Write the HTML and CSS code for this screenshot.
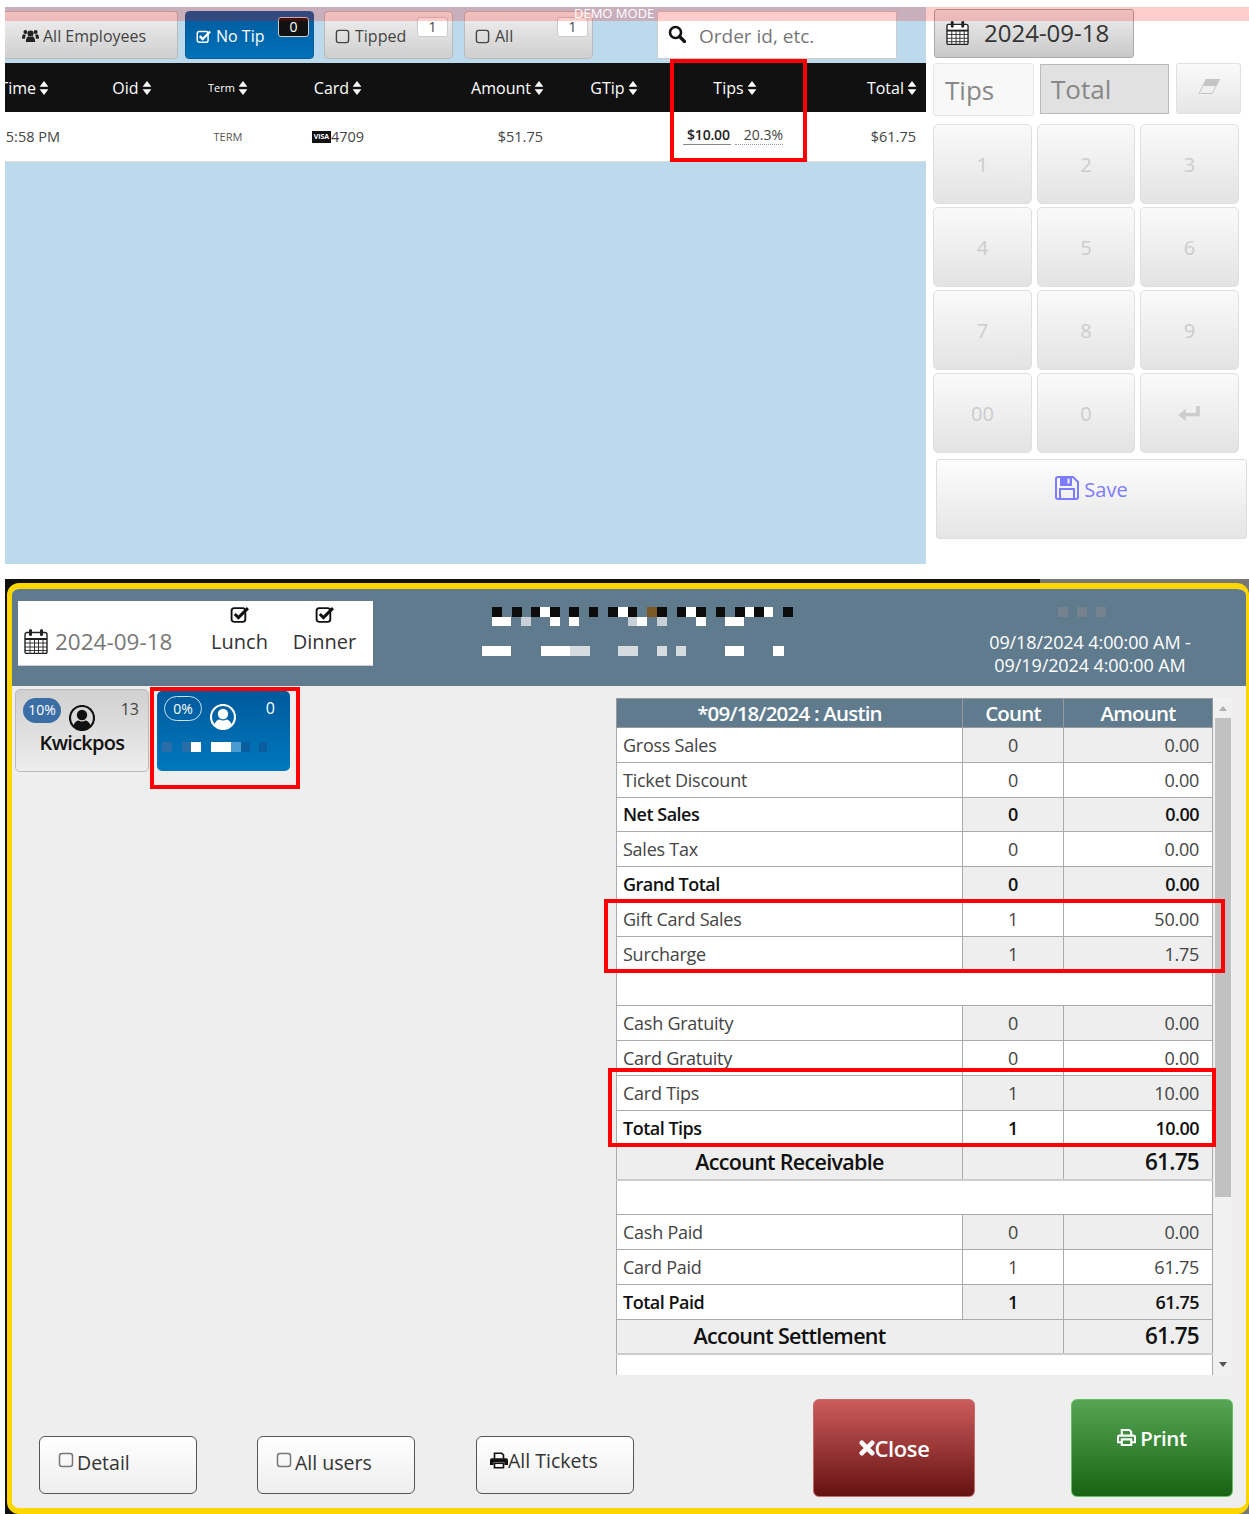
FILE: index.html
```html
<!DOCTYPE html>
<html lang="en">
<head>
    <meta charset="UTF-8">
    <meta name="viewport" content="width=device-width, initial-scale=1.0">
    <title>Tips and Sales Report</title>
    <link rel="stylesheet" href="styles.css">
</head>
<body>

<!-- icon set -->
<svg class="sprite" xmlns="http://www.w3.org/2000/svg">
    <symbol id="i-sort" viewBox="0 0 10 16"><path d="M5 0l5 6.5H0zM5 16L0 9.5h10z"/></symbol>
    <symbol id="i-users" viewBox="0 0 20 16"><circle cx="10" cy="5" r="3.6"/><circle cx="4" cy="3.2" r="2.3"/><circle cx="16" cy="3.2" r="2.3"/><path d="M4.6 15c-.4-4 1.600-6.500 3-6.800 1.200.9 3.600.9 4.800 0 1.400.3 3.400 2.800 3 6.800zM3.700 11.200H.2c-.5-3 .6-5 1.700-5.300.9.6 2 .7 3 .3-.8 1.200-1.300 3-1.200 5zM16.300 11.200h3.500c.5-3-.6-5-1.700-5.300-.9.6-2 .7-3 .3.8 1.200 1.300 3 1.200 5z"/></symbol>
    <symbol id="i-check" viewBox="0 0 18 18"><rect x="1.500" y="3" width="13" height="13" rx="2.500" fill="none" stroke="currentColor" stroke-width="1.800"/><path d="M4.500 8.500l3.500 3.500 9-9" fill="none" stroke="currentColor" stroke-width="2.800"/></symbol>
    <symbol id="i-box" viewBox="0 0 16 16"><rect x="1.500" y="1.500" width="13" height="13" rx="2.500" fill="none" stroke="currentColor" stroke-width="1.500"/></symbol>
    <symbol id="i-search" viewBox="0 0 18 18"><circle cx="7.500" cy="7.500" r="5.500" fill="none" stroke="currentColor" stroke-width="2.600"/><path d="M11.500 11.500l5 5" fill="none" stroke="currentColor" stroke-width="3.200" stroke-linecap="round"/></symbol>
    <symbol id="i-cal" viewBox="0 0 24 25"><path d="M2.500 3.500H21a2 2 0 0 1 2 2V23a1.500 1.500 0 0 1-1.500 1.500h-19A1.500 1.500 0 0 1 1 23V5.500a2 2 0 0 1 1.500-2z" fill="#fff" stroke="currentColor" stroke-width="1.400"/><path d="M1 9h22v2H1z"/><path d="M1 14h22M1 18h22M1 21.500h22M6 10v14M10.500 10v14M14.500 10v14M19 10v14" fill="none" stroke="currentColor" stroke-width=".9"/><rect x="5" y="0" width="3" height="7" rx="1.500"/><rect x="16" y="0" width="3" height="7" rx="1.500"/></symbol>
    <symbol id="i-eraser" viewBox="0 0 22 15"><path d="M8 .5h13.500L14 14.500H1z" fill="none" stroke="currentColor" stroke-width="1"/><path d="M8 .5h13.500L18 7H5z"/></symbol>
    <symbol id="i-enter" viewBox="0 0 24 16"><path d="M23 0v11H8v5L0 9.500 8 3v4.500h11V0z"/></symbol>
    <symbol id="i-save" viewBox="0 0 24 24"><path d="M1 3a2 2 0 0 1 2-2h15l5 5v15a2 2 0 0 1-2 2H3a2 2 0 0 1-2-2z" fill="none" stroke="currentColor" stroke-width="2"/><path d="M6 1h10v8H6zM5 23V13h14v10" fill="none" stroke="currentColor" stroke-width="2"/><path d="M6 1h10v8H6z"/><path d="M12.500 2.500h2v5h-2z" fill="#f4f4f4"/></symbol>
    <symbol id="i-user" viewBox="0 0 26 26"><circle cx="13" cy="13" r="12" fill="none" stroke="currentColor" stroke-width="2.200"/><circle cx="13" cy="10" r="5.200"/><path d="M4.500 20.500c1-3.500 3.500-5 5-5 2 1.300 5 1.300 7 0 1.500 0 4 1.500 5 5-2 2.700-5 4.500-8.500 4.500s-6.500-1.800-8.500-4.500z"/></symbol>
    <symbol id="i-print" viewBox="0 0 20 18"><path d="M5 6V1h8l2 2v3M5 14H1V8.500A1.500 1.500 0 0 1 2.500 7h15A1.500 1.500 0 0 1 19 8.500V14h-4" fill="none" stroke="currentColor" stroke-width="2.200"/><path d="M5 11h10v6H5z" fill="none" stroke="currentColor" stroke-width="2.200"/></symbol>
    <symbol id="i-print-solid" viewBox="0 0 20 18"><path d="M5 7V1h8l2 2v4" fill="none" stroke="currentColor" stroke-width="1.800"/><path d="M2 6.500h16a2 2 0 0 1 2 2V14h-4v-3H4v3H0V8.500a2 2 0 0 1 2-2z"/><path d="M5 12h10v5H5z" fill="none" stroke="currentColor" stroke-width="1.800"/></symbol>
    <symbol id="i-x" viewBox="0 0 14 14"><path d="M2.500 2.500l9 9M11.500 2.500l-9 9" fill="none" stroke="currentColor" stroke-width="4.200" stroke-linecap="round"/></symbol>
</svg>

<div class="demo-bar">DEMO MODE</div>

<!-- Tips screen -->
<section class="tips-screen">
    <div class="tips-main">
        <div class="toolbar">
            <button class="tool-btn tool-first"><svg class="ico ico-users"><use href="#i-users"/></svg>All Employees</button>
            <button class="tool-btn tool-on"><svg class="ico"><use href="#i-check"/></svg>No Tip<span class="badge badge-dark">0</span></button>
            <button class="tool-btn tool-tipped"><svg class="ico"><use href="#i-box"/></svg>Tipped<span class="badge">1</span></button>
            <button class="tool-btn"><svg class="ico"><use href="#i-box"/></svg>All<span class="badge">1</span></button>
            <div class="search"><svg class="ico-search"><use href="#i-search"/></svg>Order id, etc.</div>
        </div>

        <div class="grid-row grid-head">
            <div class="c-time"><span>Time</span><svg class="sort"><use href="#i-sort"/></svg></div>
            <div class="c-mid"><span>Oid</span><svg class="sort"><use href="#i-sort"/></svg></div>
            <div class="c-mid c-small"><span>Term</span><svg class="sort"><use href="#i-sort"/></svg></div>
            <div class="c-mid"><span>Card</span><svg class="sort"><use href="#i-sort"/></svg></div>
            <div class="c-right"><span>Amount</span><svg class="sort"><use href="#i-sort"/></svg></div>
            <div class="c-mid"><span>GTip</span><svg class="sort"><use href="#i-sort"/></svg></div>
            <div class="c-mid"><span>Tips</span><svg class="sort"><use href="#i-sort"/></svg></div>
            <div class="c-right"><span>Total</span><svg class="sort"><use href="#i-sort"/></svg></div>
        </div>
        <div class="grid-row grid-data">
            <div class="c-time c-time-data">5:58 PM</div>
            <div class="c-mid"></div>
            <div class="c-mid c-term">TERM</div>
            <div class="c-mid c-card"><span class="visa">VISA</span>4709</div>
            <div class="c-right">$51.75</div>
            <div class="c-mid"></div>
            <div class="c-mid c-tips"><span class="tip-amt">$10.00</span><span class="tip-pct">20.3%</span></div>
            <div class="c-right">$61.75</div>
        </div>
        <div class="mark mark-tips"></div>
    </div>

    <aside class="tips-side">
        <button class="date-btn"><svg class="ico-cal"><use href="#i-cal"/></svg>2024-09-18</button>
        <div class="entry-row">
            <div class="entry entry-tips">Tips</div>
            <div class="entry entry-total">Total</div>
            <button class="entry-clear"><svg><use href="#i-eraser"/></svg></button>
        </div>
        <div class="keypad">
            <button>1</button><button>2</button><button>3</button>
            <button>4</button><button>5</button><button>6</button>
            <button>7</button><button>8</button><button>9</button>
            <button>00</button><button>0</button>
            <button><svg class="ico-enter"><use href="#i-enter"/></svg></button>
        </div>
        <button class="save-btn"><svg><use href="#i-save"/></svg>Save</button>
    </aside>
</section>

<!-- Report dialog -->
<section class="report-back">
    <div class="report">
        <header class="report-head">
            <div class="report-filter">
                <div class="filter-date"><svg class="ico-cal"><use href="#i-cal"/></svg>2024-09-18</div>
                <label class="filter-shift"><svg><use href="#i-check"/></svg>Lunch</label>
                <label class="filter-shift"><svg><use href="#i-check"/></svg>Dinner</label>
            </div>
            <svg class="redact" width="320" height="60" viewBox="0 0 320 60">
                <path fill="#0c0c0c" d="M10 0h10v10H10zM30 0h10v10H30zM49 0h9v10h-9zM68 0h10v10H68zM87 0h10v10H87zM107 0h9v10h-9zM126 0h10v10h-10zM146 0h9v10h-9zM175 0h10v10h-10zM195 0h9v10h-9zM214 0h10v10h-10zM234 0h9v10h-9zM253 0h10v10h-10zM272 0h10v10h-10zM301 0h10v10h-10z"/>
                <path fill="#fff" d="M58 0h10v10H58zM136 0h10v10h-10zM204 0h10v10h-10zM263 0h9v10h-9zM282 0h9v10h-9z"/>
                <path fill="#7b5a24" d="M165 0h10v10h-10z"/>
                <path fill="#fff" d="M10 10h19v9H10zM68 10h10v9H68zM87 10h10v9H87zM155 10h10v9h-10zM214 10h10v9h-10zM243 10h19v9h-19z"/>
                <path fill="#c7d0d6" d="M39 10h10v9H39zM146 10h9v9h-9zM175 10h10v9h-10z"/>
                <path fill="#fff" d="M0 39h29v10H0zM59 39h29v10H59zM243 39h19v10h-19zM291 39h11v10h-11z"/>
                <path fill="#d5dbdf" d="M88 39h20v10H88zM136 39h20v10h-20zM175 39h10v10h-10zM194 39h10v10h-10z"/>
            </svg>
            <div class="report-range">
                <svg class="redact-soft" width="48" height="10" viewBox="0 0 48 10"><path fill="#74838e" d="M0 0h10v10H0zM19 0h10v10H19zM38 0h10v10H38z"/></svg>
                <div>09/18/2024 4:00:00 AM -</div>
                <div>09/19/2024 4:00:00 AM</div>
            </div>
        </header>

        <div class="report-body">
            <div class="staff">
                <div class="staff-card">
                    <span class="pct">10%</span>
                    <svg class="staff-user"><use href="#i-user"/></svg>
                    <span class="staff-count">13</span>
                    <div class="staff-name">Kwickpos</div>
                </div>
                <div class="staff-card staff-on">
                    <span class="pct pct-line">0%</span>
                    <svg class="staff-user"><use href="#i-user"/></svg>
                    <span class="staff-count">0</span>
                    <svg class="staff-blur" width="110" height="11" viewBox="0 0 110 11">
                        <path fill="#2a6ea8" d="M5 1h10v10H5zM25 1h9v10h-9z"/>
                        <path fill="#fff" d="M34 1h10v10H34zM54 1h20v10H54z"/>
                        <path fill="#0a5ea0" d="M84 1h9v10h-9zM102 1h9v10h-9z"/>
                        <path fill="#4a9bd0" d="M74 1h10v10H74z"/>
                    </svg>
                </div>
                <div class="mark mark-staff"></div>
            </div>

            <div class="sheet">
                <div class="sheet-scroll">
                    <table class="sales">
                        <colgroup><col class="col-name"><col class="col-count"><col class="col-amt"></colgroup>
                        <thead>
                            <tr><th>*09/18/2024 : Austin</th><th>Count</th><th>Amount</th></tr>
                        </thead>
                        <tbody>
                            <tr><td>Gross Sales</td><td class="n">0</td><td class="a">0.00</td></tr>
                            <tr><td>Ticket Discount</td><td class="n">0</td><td class="a">0.00</td></tr>
                            <tr class="b"><td>Net Sales</td><td class="n">0</td><td class="a">0.00</td></tr>
                            <tr><td>Sales Tax</td><td class="n">0</td><td class="a">0.00</td></tr>
                            <tr class="b"><td>Grand Total</td><td class="n">0</td><td class="a">0.00</td></tr>
                            <tr><td>Gift Card Sales</td><td class="n">1</td><td class="a">50.00</td></tr>
                            <tr><td>Surcharge</td><td class="n">1</td><td class="a">1.75</td></tr>
                            <tr><td colspan="3"></td></tr>
                            <tr><td>Cash Gratuity</td><td class="n">0</td><td class="a">0.00</td></tr>
                            <tr><td>Card Gratuity</td><td class="n">0</td><td class="a">0.00</td></tr>
                            <tr><td>Card Tips</td><td class="n">1</td><td class="a">10.00</td></tr>
                            <tr class="b"><td>Total Tips</td><td class="n">1</td><td class="a">10.00</td></tr>
                            <tr class="sum"><td>Account Receivable</td><td class="n"></td><td class="a">61.75</td></tr>
                            <tr><td colspan="3"></td></tr>
                            <tr><td>Cash Paid</td><td class="n">0</td><td class="a">0.00</td></tr>
                            <tr><td>Card Paid</td><td class="n">1</td><td class="a">61.75</td></tr>
                            <tr class="b"><td>Total Paid</td><td class="n">1</td><td class="a">61.75</td></tr>
                            <tr class="sum"><td class="settle" colspan="2">Account Settlement</td><td class="a">61.75</td></tr>
                            <tr><td colspan="3"></td></tr>
                        </tbody>
                    </table>
                </div>
                <div class="scrollbar">
                    <span class="arrow-up"></span>
                    <span class="thumb"></span>
                    <span class="arrow-down"></span>
                </div>
                <div class="mark mark-gift"></div>
                <div class="mark mark-card"></div>
            </div>
        </div>

        <footer class="report-foot">
            <div class="foot-left">
                <button class="opt-btn"><svg class="ico-box"><use href="#i-box"/></svg>Detail</button>
                <button class="opt-btn"><svg class="ico-box"><use href="#i-box"/></svg>All users</button>
                <button class="opt-btn opt-up"><svg class="ico-print"><use href="#i-print-solid"/></svg>All Tickets</button>
            </div>
            <div class="foot-right">
                <button class="big-btn big-close"><svg class="ico-x"><use href="#i-x"/></svg>Close</button>
                <button class="big-btn big-print"><svg class="ico-pr"><use href="#i-print"/></svg>Print</button>
            </div>
        </footer>
    </div>
</section>

</body>
</html>
```

FILE: styles.css
```css
* {
    margin: 0;
    padding: 0;
    box-sizing: border-box;
}

body {
    font-family: "Open Sans", "Liberation Sans", sans-serif;
    background-color: #ffffff;
    color: #333;
    width: 1249px;
    position: relative;
}

button {
    font-family: inherit;
    cursor: pointer;
}

.sprite {
    display: none;
}

svg {
    fill: currentColor;
}

/* demo strip lies over everything */
.demo-bar {
    position: absolute;
    top: 7px;
    left: 5px;
    right: 0;
    height: 14px;
    background: rgba(255, 0, 0, 0.2);
    color: #fff;
    font-size: 13px;
    line-height: 12px;
    padding-left: 569px;
    z-index: 20;
}

/* red review marks */
.mark {
    position: absolute;
    border: 4px solid #f00;
    z-index: 10;
    pointer-events: none;
}

/* ---- Tips screen ---- */
.tips-screen {
    display: flex;
    height: 579px;
}

.tips-main {
    position: relative;
    width: 921px;
    height: 557px;
    margin: 7px 0 0 5px;
    background: #bcdaeb;
}

.toolbar {
    display: flex;
    height: 56px;
    padding-top: 4px;
}

.tool-btn {
    position: relative;
    display: flex;
    flex: none;
    align-items: center;
    width: 129px;
    height: 48px;
    margin-right: 10px;
    padding: 2px 0 0 10px;
    border: 1px solid #bbb;
    border-radius: 4px;
    background: linear-gradient(#f0f0f0, #cfcfcf);
    color: #444;
    font-size: 16px;
}

.tool-first {
    width: 173px;
    margin-right: 7px;
    padding-left: 17px;
    border-left: none;
    border-radius: 0 4px 4px 0;
}

.tool-tipped {
    margin-right: 11px;
}

.tool-on {
    background: linear-gradient(#005a9c, #0071b9);
    border-color: #0b5c98;
    color: #fff;
}

.ico {
    width: 15px;
    height: 15px;
    margin-right: 5px;
}

.ico-users {
    width: 17px;
    height: 14px;
    margin-right: 4px;
    color: #222;
}

.badge {
    position: absolute;
    top: 5px;
    right: 4px;
    width: 31px;
    height: 20px;
    border: 1px solid #ccc;
    border-radius: 3px;
    background: #fff;
    color: #444;
    font-size: 14px;
    line-height: 17px;
    text-align: center;
}

.badge-dark {
    background: #111;
    color: #fff;
}

.search {
    display: flex;
    flex: none;
    align-items: center;
    width: 240px;
    height: 48px;
    margin-left: 54px;
    padding: 2px 0 0 10px;
    background: #fff;
    border: 1px solid #ccc;
    border-radius: 2px;
    color: #777;
    font-size: 19px;
}

.ico-search {
    width: 18px;
    height: 18px;
    margin: -4px 13px 0 0;
    color: #111;
}

.grid-row {
    display: grid;
    grid-template-columns: 65px 124px 68px 152px 139px 122px 120px 131px;
    align-items: center;
}

.grid-head {
    height: 49px;
    background: #111;
    color: #fff;
    font-size: 16px;
}

.grid-head > div {
    display: flex;
    align-items: center;
    justify-content: center;
    gap: 3px;
}

.grid-head span,
.sort {
    flex: none;
}

.sort {
    width: 10px;
    height: 14px;
}

.c-time {
    display: flex;
    justify-content: flex-end;
    overflow: hidden;
    white-space: nowrap;
}

.grid-head .c-time {
    justify-content: flex-end;
    width: 44px;
    padding-right: 0;
}

.grid-head .c-right {
    justify-content: flex-end;
    padding-right: 9px;
}

.grid-head .c-small {
    font-size: 11px;
}

.grid-data {
    height: 50px;
    background: #fff;
    border-bottom: 1px solid #ddd;
    color: #444;
    font-size: 14.500px;
}

.c-time-data {
    padding-right: 10px;
}

.c-mid {
    text-align: center;
}

.c-right {
    text-align: right;
    padding-right: 10px;
}

.c-mid.c-term {
    font-size: 11px;
    color: #555;
}

.c-card {
    display: flex;
    justify-content: center;
    align-items: center;
}

.visa {
    width: 19px;
    height: 12px;
    background: #111;
    color: #fff;
    font-size: 7px;
    font-weight: 700;
    line-height: 12px;
}

.c-tips {
    display: flex;
    justify-content: center;
    gap: 4px;
    padding: 0 4px 4px 0;
    font-size: 14px;
}

.tip-amt {
    color: #222;
    font-weight: 600;
    letter-spacing: -0.200px;
    padding: 0 1px 0 4px;
    border-bottom: 1px solid #888;
}

.tip-pct {
    padding: 0 0 0 9px;
    border-bottom: 1px dotted #999;
}

.mark-tips {
    top: 52px;
    left: 665px;
    width: 137px;
    height: 103px;
}

.tips-side {
    width: 323px;
    padding: 9px 0 0 7px;
}

.date-btn {
    display: flex;
    align-items: center;
    width: 200px;
    height: 49px;
    margin-left: 1px;
    padding: 0 0 2px 11px;
    border: 1px solid #aaa;
    border-radius: 3px;
    background: linear-gradient(#eee, #c9c9c9);
    color: #333;
    font-size: 24px;
}

.ico-cal {
    width: 23px;
    height: 24px;
    margin-right: 15px;
    color: #222;
}

.entry-row {
    display: flex;
    align-items: flex-start;
    margin-top: 5px;
}

.entry {
    height: 53px;
    font-size: 26px;
    color: #888;
    padding: 8px 0 0 11px;
}

.entry-tips {
    width: 101px;
    margin-right: 6px;
    background: #f8f8f8;
    border: 1px solid #e6e6e6;
    border-radius: 3px;
}

.entry-total {
    width: 129px;
    height: 50px;
    margin-top: 1px;
    margin-right: 7px;
    padding: 6px 0 0 10px;
    background: #e1e1e1;
    border: 1px solid #bbb;
}

.entry-clear {
    width: 65px;
    height: 51px;
    background: linear-gradient(#fafafa, #e6e6e6);
    border: 1px solid #e0e0e0;
    border-radius: 3px;
    color: #c4c4c4;
}

.entry-clear svg {
    width: 22px;
    height: 15px;
}

.keypad {
    display: grid;
    grid-template-columns: 99px 98px 99px;
    grid-auto-rows: 79.500px;
    column-gap: 5px;
    row-gap: 3.500px;
    margin-top: 8px;
}

.keypad button {
    padding-top: 1px;
    background: linear-gradient(#fafafa, #e3e3e3);
    border: 1px solid #e0e0e0;
    border-radius: 5px;
    color: #ccc;
    font-size: 20px;
}

.ico-enter {
    width: 23px;
    height: 15px;
    color: #ccc;
}

.save-btn {
    display: flex;
    align-items: flex-start;
    justify-content: center;
    width: 311px;
    height: 80px;
    margin: 6px 0 0 3px;
    padding-top: 16px;
    background: linear-gradient(#fdfdfd, #e5e5e5);
    border: 1px solid #ddd;
    border-radius: 3px;
    color: #7c7cff;
    font-size: 20px;
}

.save-btn svg {
    width: 24px;
    height: 24px;
    margin-right: 5px;
}

/* ---- Report dialog ---- */
.report-back {
    width: 1244px;
    height: 935px;
    margin-left: 5px;
    background: linear-gradient(90deg, #111 1035px, #777 1035px);
    padding: 4px 0 0 2px;
}

.report {
    height: 931px;
    display: flex;
    flex-direction: column;
    background: #eee;
    border-style: solid;
    border-color: #ffd700;
    border-width: 6px 3px 6px 5px;
    border-radius: 12px;
    overflow: hidden;
}

.report-head {
    display: flex;
    height: 97px;
    flex: none;
    background: #607b8d;
    color: #fff;
}

.report-filter {
    display: flex;
    width: 355px;
    height: 65px;
    margin: 12px 0 0 6px;
    background: #fff;
    border-bottom: 1px solid #ccd;
    color: #333;
    font-size: 20px;
}

.filter-date {
    display: flex;
    align-items: center;
    width: 179px;
    padding: 16px 0 0 6px;
    color: #777;
    font-size: 22.500px;
}

.filter-date .ico-cal {
    width: 24px;
    height: 25px;
    margin-right: 7px;
}

.filter-shift {
    display: flex;
    flex-direction: column;
    align-items: center;
    width: 85px;
    padding-top: 4px;
    line-height: 27px;
}

.filter-shift svg {
    width: 19px;
    height: 19px;
    margin-bottom: 4px;
    color: #111;
}

.redact {
    flex: none;
    margin: 18px 0 0 109px;
}

.report-range {
    width: 300px;
    margin-left: 138px;
    text-align: center;
    font-size: 18px;
    line-height: 23px;
    letter-spacing: -0.100px;
}

.redact-soft {
    display: block;
    margin: 18px auto 14px;
    transform: translateX(-8px);
}

.report-body {
    display: flex;
    flex: 1;
    min-height: 0;
}

.staff {
    position: relative;
    display: flex;
    align-items: flex-start;
    width: 604px;
    padding: 3px 0 0 3px;
}

.staff-card {
    position: relative;
    width: 134px;
    height: 83px;
    margin-right: 8px;
    background: linear-gradient(#d0d0d0, #ededed);
    border: 1px solid #bbb;
    border-radius: 5px;
    text-align: center;
    color: #111;
}

.staff-on {
    width: 133px;
    height: 80px;
    margin-top: 2px;
    background: linear-gradient(#005a9c, #0078bd);
    border: none;
    color: #fff;
}

.pct {
    position: absolute;
    top: 8px;
    left: 7px;
    width: 38px;
    height: 25px;
    background: #3a6ea5;
    border-radius: 13px;
    color: #fff;
    font-size: 14px;
    line-height: 24px;
}

.pct-line {
    left: 7px;
    top: 5px;
    background: transparent;
    border: 1px solid #cfe0ee;
}

.staff-user {
    position: absolute;
    top: 15px;
    left: 53px;
    width: 26px;
    height: 26px;
    color: #111;
}

.staff-on .staff-user {
    top: 13px;
    left: 53px;
    color: #fff;
}

.staff-count {
    position: absolute;
    top: 8px;
    right: 9px;
    font-size: 16px;
    color: #444;
}

.staff-on .staff-count {
    top: 6px;
    right: 15px;
    color: #fff;
}

.staff-name {
    padding-top: 39px;
    font-size: 20px;
    font-weight: 600;
    letter-spacing: -0.700px;
}

.staff-blur {
    position: absolute;
    top: 50px;
    left: 0;
}

.mark-staff {
    top: 1px;
    left: 138px;
    width: 150px;
    height: 102px;
}

.sheet {
    position: relative;
    display: flex;
    align-items: flex-start;
    padding-top: 12px;
}

.sheet-scroll {
    width: 598px;
    height: 677px;
    overflow: hidden;
}

.sales {
    width: 596px;
    table-layout: fixed;
    border-collapse: collapse;
    font-size: 18px;
    color: #444;
    letter-spacing: -0.250px;
}

.col-name {
    width: 346px;
}

.col-count {
    width: 101px;
}

.col-amt {
    width: 149px;
}

.sales th {
    height: 29px;
    background: #607b8d;
    border: 1px solid #999;
    color: #fff;
    font-size: 20.500px;
    font-weight: 600;
    letter-spacing: -0.800px;
    line-height: 26px;
}

.sales td {
    height: 34.800px;
    padding: 0 13px 0 6px;
    background: #fff;
    border: 1px solid #aaa;
    line-height: 26px;
    white-space: nowrap;
}

.sales tbody tr:nth-child(odd) td.n,
.sales tbody tr:nth-child(odd) td.a {
    background: #eee;
}

.sales .n {
    padding: 0;
    text-align: center;
}

.sales .a {
    text-align: right;
}

.sales .b td {
    color: #111;
    font-weight: 600;
    letter-spacing: -0.500px;
}

.sales .sum td {
    background: #eee;
    color: #111;
    font-size: 21.500px;
    font-weight: 600;
    letter-spacing: -0.700px;
    border-bottom: 2px solid #ccc;
}

.sales .sum td:first-child {
    padding: 0;
    text-align: center;
}

.sales .sum td.settle {
    padding-right: 101px;
}

.sales .sum td.a {
    font-size: 22.500px;
}

.mark-gift {
    top: 213px;
    left: -12px;
    width: 621px;
    height: 74px;
}

.mark-card {
    top: 382px;
    left: -8px;
    width: 608px;
    height: 79px;
}

.scrollbar {
    position: relative;
    width: 18px;
    height: 677px;
    background: #f1f1f1;
}

.thumb {
    position: absolute;
    top: 20px;
    left: 1px;
    width: 16px;
    height: 479px;
    background: #c1c1c1;
}

.arrow-up,
.arrow-down {
    position: absolute;
    left: 5px;
    width: 0;
    height: 0;
    border-left: 4px solid transparent;
    border-right: 4px solid transparent;
}

.arrow-up {
    top: 8px;
    border-bottom: 5px solid #b0b0b0;
}

.arrow-down {
    bottom: 8px;
    border-top: 5px solid #555;
}

.report-foot {
    display: flex;
    align-items: flex-end;
    justify-content: space-between;
    flex: none;
    height: 109px;
    padding: 0 13px 11px 27px;
}

.foot-left {
    display: flex;
    gap: 60px;
    padding-bottom: 3px;
}

.opt-btn {
    display: flex;
    align-items: center;
    width: 158px;
    height: 58px;
    padding: 0 0 6px 18px;
    background: linear-gradient(#fff, #eee);
    border: 1px solid #555;
    border-radius: 6px;
    color: #333;
    font-size: 19.500px;
}

.opt-btn.opt-up {
    margin-left: 1px;
    padding: 0 0 10px 13px;
}

.ico-box {
    width: 16px;
    height: 16px;
    margin: 0 3px 4px 0;
    color: #777;
}

.ico-print {
    width: 18px;
    height: 17px;
    color: #111;
}

.foot-right {
    display: flex;
    gap: 96px;
}

.big-btn {
    display: flex;
    align-items: center;
    justify-content: center;
    width: 162px;
    height: 98px;
    border-radius: 6px;
    color: #fff;
    font-size: 22px;
    font-weight: 600;
    letter-spacing: -0.400px;
}

.big-close {
    background: linear-gradient(#cc5c5c, #661111);
    border: 1px solid #c76a6a;
}

.big-print {
    padding-bottom: 21px;
    background: linear-gradient(#55a555, #186414);
    border: 1px solid #62c262;
    font-size: 20.500px;
}

.ico-x {
    width: 16px;
    height: 16px;
}

.ico-pr {
    width: 19px;
    height: 17px;
    margin-right: 4px;
}
```
